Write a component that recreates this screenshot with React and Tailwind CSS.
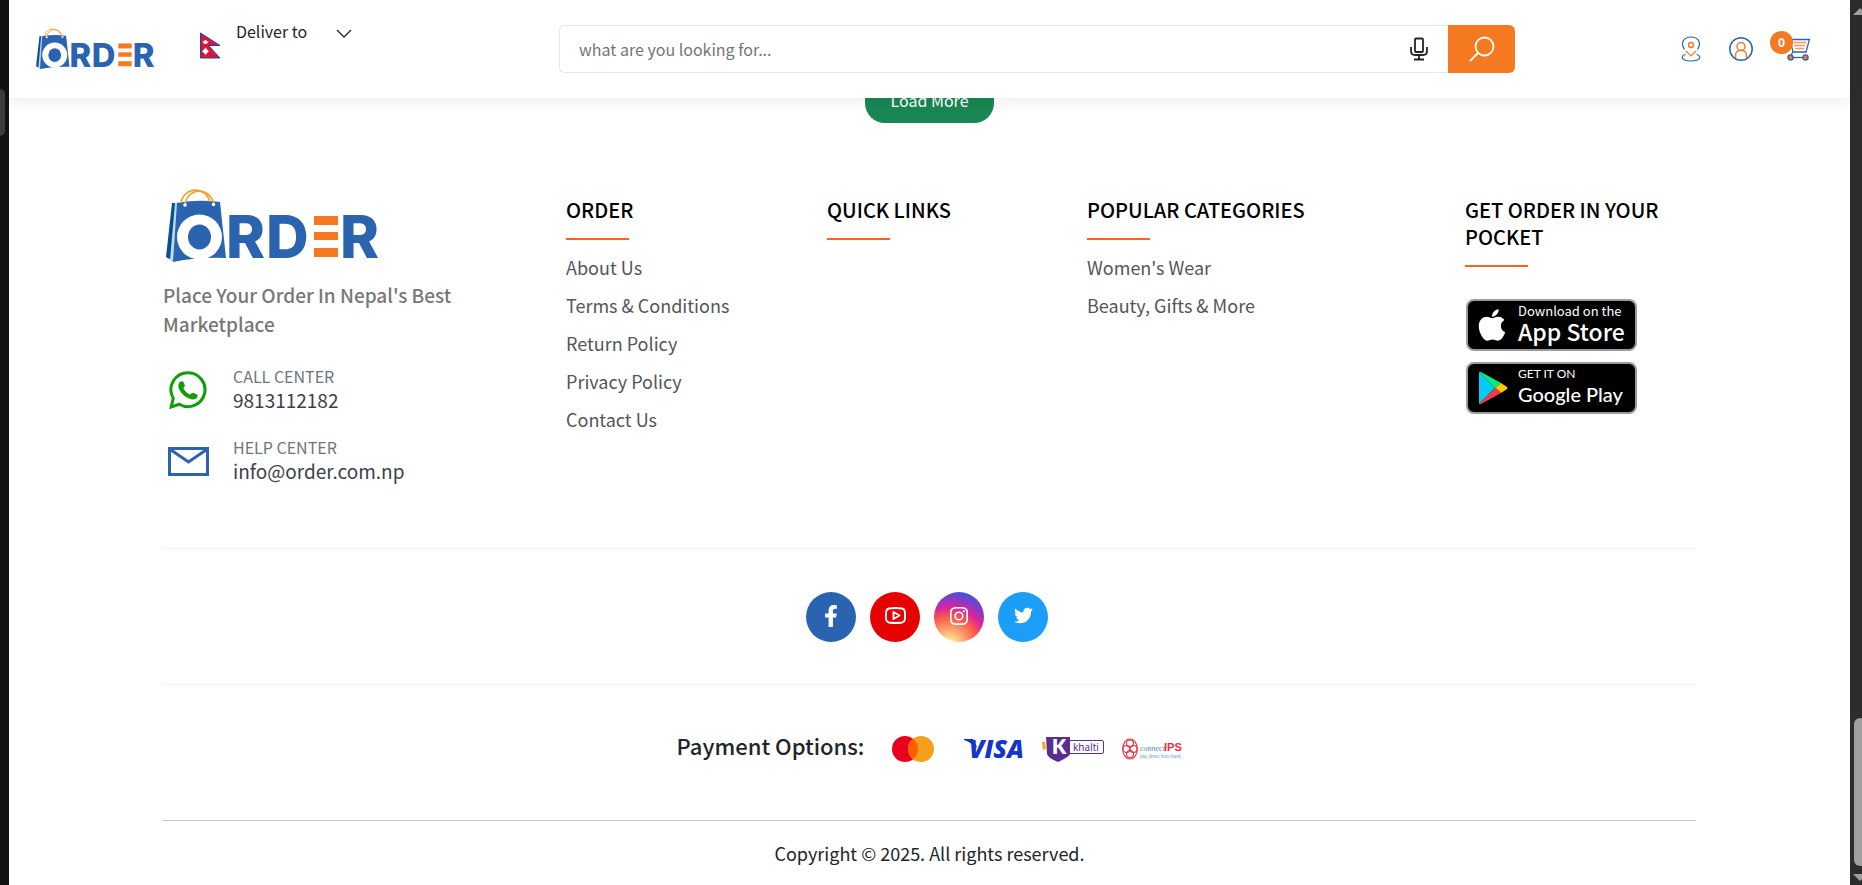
import { FaApple, FaFacebookF, FaTwitter } from "react-icons/fa";
import { BsInstagram } from "react-icons/bs";

/** ---- Data ---- */
const columns = [
  {
    title: "Order",
    links: [
      { label: "About Us", href: "/about-us" },
      { label: "Terms & Conditions", href: "/terms-and-conditions" },
      { label: "Return Policy", href: "/return-policy" },
      { label: "Privacy Policy", href: "/privacy-policy" },
      { label: "Contact Us", href: "/contact-us" },
    ],
  },
  { title: "Quick Links", links: [] },
  {
    title: "Popular Categories",
    links: [
      { label: "Women's Wear", href: "/category/womens-wear" },
      { label: "Beauty, Gifts & More", href: "/category/beauty-gifts" },
    ],
  },
];

/** ---- Logo ---- */
function Logo({ className }) {
  return (
    <svg viewBox="0 0 212 72" className={`overflow-visible ${className}`} role="img" aria-label="Order">
      <path d="M6 13 L0 67 L7 71 L12 13Z" fill="#07508f" />
      <path d="M9 13 L4 70 L8 71 L13 12Z" fill="#c5d6ea" />
      <path d="M11 13 Q32 9 54 12 L60 68 Q33 67 7 72Z" fill="#2a64b0" />
      <g fill="none" stroke="#f6a02c" strokeWidth="1.6">
        <path d="M15 13 C18 -4 40 -4 44 12" />
        <path d="M19 15 C21 -2 43 -5 48 14" />
      </g>
      <circle cx="19" cy="15" r="1.8" fill="#fff" />
      <circle cx="47.5" cy="14.5" r="1.8" fill="#fff" />
      <circle cx="33.5" cy="47" r="22.5" fill="#fff" />
      <ellipse cx="33.5" cy="47" rx="11.5" ry="12.5" fill="#2a64b0" />
      <g fill="#2a64b0" fontFamily="Inter, sans-serif" fontWeight="800" fontSize="59">
        <text x="60" y="68">R</text>
        <text x="100" y="68">D</text>
        <text x="174" y="68">R</text>
      </g>
      <g fill="#f57920">
        <rect x="148" y="26" width="24" height="9" />
        <rect x="148" y="42" width="24" height="8" />
        <rect x="148" y="58" width="24" height="9" />
      </g>
    </svg>
  );
}

/** ---- Header icons ---- */
const NepalFlag = () => (
  <svg viewBox="0 0 21 27" className="h-[27px] w-[21px]" aria-hidden="true">
    <path d="M.5 1 L20 13.5 H8.5 L20 26 H.5Z" fill="#dc143c" stroke="#1c4a9c" strokeWidth="1" />
    <path d="M2.5 9 Q5.5 11 8.5 9 Q8 12 5.5 12 Q3 12 2.5 9Z" fill="#fff" />
    <circle cx="5.5" cy="9.2" r="1.3" fill="#fff" />
    <path d="M5.5 15.5 L7 17.5 L9 19.2 L7 21 L5.5 23 L4 21 L2 19.2 L4 17.5Z" fill="#fff" />
  </svg>
);

const ChevronDown = () => (
  <svg viewBox="0 0 16 9" className="h-[9px] w-4" fill="none" stroke="#212529" strokeWidth="1.3" aria-hidden="true">
    <path d="M1 1 L8 8 L15 1" />
  </svg>
);

const MicIcon = () => (
  <svg viewBox="0 0 18 24" className="h-6 w-[18px]" fill="none" stroke="#212529" strokeWidth="1.8" aria-hidden="true">
    <rect x="5" y="1.5" width="8" height="13.5" rx="1" />
    <path d="M1 10 V14 Q1 18 5 18 H13 Q17 18 17 14 V10" />
    <path d="M9 18 V22.5 M4 22.5 H14" />
  </svg>
);

const SearchIcon = () => (
  <svg viewBox="0 0 26 26" className="size-[26px]" fill="none" stroke="#fff" strokeWidth="1.8" aria-hidden="true">
    <circle cx="15.5" cy="10.5" r="9" />
    <path d="M9 17 L1 25" />
  </svg>
);

const PinIcon = () => (
  <svg viewBox="0 0 20 26" className="h-[26px] w-5" fill="none" stroke="#2a64b0" strokeWidth="1.2" aria-hidden="true">
    <path d="M3.5 13.5 C-1.5 6 4 1 10 1 C16 1 21.5 6 16.5 13.5" />
    <path d="M5 15 L10 20 L15 15" stroke="#f57920" />
    <circle cx="10" cy="9" r="2.5" stroke="#f57920" strokeWidth="1.4" />
    <path d="M4.5 18.5 C-1 20 0 25 10 25 C20 25 21 20 15.5 18.5" />
  </svg>
);

const UserIcon = () => (
  <svg viewBox="0 0 24 24" className="size-6" fill="none" strokeWidth="1.5" aria-hidden="true">
    <circle cx="12" cy="12" r="11.2" stroke="#2a64b0" />
    <circle cx="12" cy="9.5" r="4" stroke="#f57920" />
    <path d="M6.5 21 V18.5 C6.5 11.5 17.5 11.5 17.5 18.5 V21" stroke="#f57920" />
  </svg>
);

const CartIcon = () => (
  <svg viewBox="0 0 26 24" className="h-6 w-[26px]" fill="none" stroke="#2a64b0" strokeWidth="1.3" aria-hidden="true">
    <path d="M4 2.5 H24.5 L21 15 H8 L5 2.5 M8 15 L6 18" />
    <path d="M8.5 5.5 H21.5 M9 8.5 H20.5 M10 11.5 H19.5" stroke="#f79a5b" />
    <path d="M8 20.5 H18" />
    <circle cx="5.5" cy="20.5" r="2.6" fill="#f57920" />
    <circle cx="20.5" cy="20.5" r="2.6" fill="#f57920" />
  </svg>
);

/** ---- Contact icons ---- */
const WhatsappIcon = () => (
  <svg viewBox="0 0 111 112" className="size-[38px]" aria-hidden="true">
    <path
      d="M56 5 A50 50 0 1 1 30 98 L6 106 L12 80 A50 50 0 0 1 56 5Z"
      fill="none"
      stroke="#129e0c"
      strokeWidth="9"
    />
    <path
      d="M30 34 C34 29 40 29 42 32 L46 42 C47 46 43 48 42 51 C46 60 53 66 61 69 C64 68 67 63 71 64 L82 69 C86 72 84 79 78 82 C70 86 60 82 54 79 C44 74 36 66 30 55 C26 47 26 40 30 34Z"
      fill="#129e0c"
    />
  </svg>
);

const MailIcon = () => (
  <svg viewBox="0 0 41 29" className="h-[29px] w-[41px]" fill="none" stroke="#2a64b0" strokeWidth="3" aria-hidden="true">
    <rect x="1.5" y="1.5" width="38" height="26" />
    <path d="M3 3 L20.5 15 L38 3" />
  </svg>
);

const YoutubeIcon = () => (
  <svg viewBox="0 0 21 17" className="h-[17px] w-[21px]" fill="none" stroke="#fff" strokeWidth="1.9" aria-hidden="true">
    <path d="M4 1.5 Q10.5 .5 17 1.5 Q19.5 2 19.8 4.5 Q20.3 8.5 19.8 12.5 Q19.5 15 17 15.5 Q10.5 16.5 4 15.5 Q1.5 15 1.2 12.5 Q.7 8.5 1.2 4.5 Q1.5 2 4 1.5Z" />
    <path d="M8.5 5 L14.5 8.5 L8.5 12Z" strokeLinejoin="round" />
  </svg>
);

const PlayIcon = () => (
  <svg viewBox="0 0 30 34" className="h-[34px] w-[30px]" aria-hidden="true">
    <path d="M1 1 V33 L17 17Z" fill="#00cdf7" />
    <path d="M1 1 L2.5 .8 L23 12 L17.5 17.5Z" fill="#00ee76" />
    <path d="M23 12 L29 16 Q30 17 29 18 L23 22 L17.5 17Z" fill="#ffca00" />
    <path d="M1 33 L2.5 33.2 L23 22 L17.5 16.5Z" fill="#f83748" />
  </svg>
);

const socials = [
  { name: "Facebook", bg: "bg-[#2a64b0]", icon: <FaFacebookF size={22} /> },
  { name: "YouTube", bg: "bg-[#e60000]", icon: <YoutubeIcon /> },
  {
    name: "Instagram",
    bg: "bg-[radial-gradient(circle_at_30%_107%,#fdf497_0%,#fdf497_5%,#fd5949_45%,#d6249f_60%,#285aeb_90%)]",
    icon: <BsInstagram size={18} />,
  },
  { name: "Twitter", bg: "bg-[#1b9df8]", icon: <FaTwitter size={19} /> },
];

/** ---- Payment logos ---- */
const Mastercard = () => (
  <svg viewBox="0 0 42 26" className="h-[26px] w-[42px]" role="img" aria-label="Mastercard">
    <circle cx="13" cy="13" r="13" fill="#eb001b" />
    <circle cx="29" cy="13" r="13" fill="#f79e1b" />
    <path d="M21 2.75 A13 13 0 0 1 21 23.25 A13 13 0 0 1 21 2.75Z" fill="#ff5f00" />
  </svg>
);

const Visa = () => (
  <svg viewBox="0 0 60 20" className="h-5 w-[60px] overflow-visible" role="img" aria-label="Visa">
    <path d="M0 0 H9 L13 8 L11 9 Q7 3 0 1Z" fill="#1434cb" />
    <text x="5" y="19" fill="#1434cb" fontFamily="'Open Sans', sans-serif" fontStyle="italic" fontWeight="800" fontSize="25">
      VISA
    </text>
  </svg>
);

const Khalti = () => (
  <svg viewBox="0 0 62 25" className="h-[25px] w-[62px] overflow-visible" role="img" aria-label="Khalti">
    <path d="M0 5 L3 4.5 L4 12 L1 13Z" fill="#f9a51a" />
    <rect x="20.5" y="3.5" width="41" height="13" rx="1.5" fill="#fff" stroke="#5c2d91" />
    <path d="M4 0 H28 V17 Q27 20 16 25 Q6 21 5 17Z" fill="#5c2d91" />
    <text x="10" y="17" fill="#fff" fontFamily="Lato, sans-serif" fontWeight="800" fontSize="20">K</text>
    <text x="31" y="14" fill="#5c2d91" fontFamily="'Noto Sans', sans-serif" fontSize="10">khalti</text>
  </svg>
);

const ConnectIps = () => (
  <svg viewBox="0 0 60 22" className="h-[22px] w-[60px] overflow-visible" role="img" aria-label="connectIPS">
    <g fill="none" stroke="#ed2f3b" strokeWidth="1.1">
      <ellipse cx="8" cy="11" rx="7.3" ry="10" />
      <circle cx="8" cy="5.5" r="3.5" />
      <circle cx="4.5" cy="11" r="3.5" />
      <circle cx="11.5" cy="11" r="3.5" />
      <circle cx="8" cy="16" r="3.5" />
    </g>
    <text x="18" y="13" fill="#4b86c4" fontFamily="'Liberation Serif', serif" fontStyle="italic" fontSize="8">connect</text>
    <text x="42" y="13" fill="#ed2f3b" fontFamily="'Liberation Sans', sans-serif" fontWeight="700" fontSize="11">IPS</text>
    <text x="18" y="20" fill="#6f9ccc" fontFamily="'Liberation Sans', sans-serif" fontSize="4.5">pay direct from bank</text>
  </svg>
);

function ColumnTitle({ children }) {
  return (
    <>
      <h3 className="text-xl/[27px] font-medium text-black uppercase">{children}</h3>
      <span className="mt-[15px] block h-0.5 w-[63px] bg-[#fd6220]" />
    </>
  );
}

function Header() {
  return (
    <header className="relative z-10 flex h-[98px] items-center bg-white pr-[39px] pl-[27px] shadow-[0_4px_14px_rgba(0,0,0,0.07)]">
      <div className="flex w-[523px] shrink-0 items-start">
        <a href="/" className="mr-[46px]">
          <Logo className="h-10 w-[118px]" />
        </a>
        <button type="button" className="flex items-start text-base/6">
          <span className="pt-[3px]">
            <NepalFlag />
          </span>
          <span className="ml-[15px] -mt-2.5">Deliver to</span>
          <span className="ml-[29px]">
            <ChevronDown />
          </span>
        </button>
      </div>

      <form role="search" className="flex h-12 max-w-[956px] flex-1">
        <div className="flex flex-1 items-center rounded-l-md border border-r-0 border-[#e6e6e6] pr-5">
          <input
            type="search"
            aria-label="Search products"
            placeholder="what are you looking for..."
            className="h-full flex-1 pl-[19px] text-base outline-none placeholder:text-[#6f7680]"
          />
          <button type="button" aria-label="Search by voice">
            <MicIcon />
          </button>
        </div>
        <button
          type="submit"
          aria-label="Search"
          className="flex w-[67px] items-center justify-center rounded-r-md bg-[#f57920]"
        >
          <SearchIcon />
        </button>
      </form>

      <nav className="ml-auto flex items-center gap-7">
        <a href="/track-order" aria-label="Track order">
          <PinIcon />
        </a>
        <a href="/account" aria-label="Account">
          <UserIcon />
        </a>
        <a href="/cart" aria-label="Cart" className="relative ml-1">
          <CartIcon />
          <span className="absolute -top-[6px] -left-[15px] flex size-[23px] items-center justify-center rounded-full bg-[#f57920] pb-0.5 text-xs/4 font-bold text-white">
            0
          </span>
        </a>
      </nav>
    </header>
  );
}

function Footer() {
  return (
    <footer className="mx-[154px] mt-16">
      <div className="grid grid-cols-[403fr_261fr_260fr_378fr_231fr] pb-[65px]">
        <div>
          <a href="/" className="block pt-[3px] pl-[3px]">
            <Logo className="h-[72px] w-[212px]" />
          </a>
          <p className="mt-[18px] max-w-[320px] text-[19px]/[29px] font-medium text-[#777]">
            Place Your Order In Nepal's Best Marketplace
          </p>
          <div className="mt-[26px] flex items-center">
            <span className="flex w-[70px] pt-[3px] pl-1.5">
              <WhatsappIcon />
            </span>
            <div>
              <p className="text-base/6 text-[#6c757d]">CALL CENTER</p>
              <a href="tel:9813112182" className="block text-[19px]/6 text-[#3b414b]">
                9813112182
              </a>
            </div>
          </div>
          <div className="mt-[23px] flex items-center">
            <span className="flex w-[70px] pt-[5px] pl-[5px]">
              <MailIcon />
            </span>
            <div>
              <p className="text-base/6 text-[#6c757d]">HELP CENTER</p>
              <a href="mailto:info@order.com.np" className="block text-[19px]/6 text-[#3b414b]">
                info@order.com.np
              </a>
            </div>
          </div>
        </div>

        {columns.map((col) => (
          <div key={col.title} className="pt-[9px]">
            <ColumnTitle>{col.title}</ColumnTitle>
            <ul className="mt-2">
              {col.links.map((it) => (
                <li key={it.href} className="text-lg/[38px] text-[#52565b]">
                  <a href={it.href}>{it.label}</a>
                </li>
              ))}
            </ul>
          </div>
        ))}

        <div className="pt-[9px]">
          <ColumnTitle>Get Order In Your Pocket</ColumnTitle>
          <div className="mt-8 flex flex-col items-start gap-[11px] pl-px">
            <a
              href="/app-store"
              className="flex h-[52px] w-[171px] items-center rounded-lg border-2 border-[#9b9b9b] bg-black pl-1.5 text-white"
            >
              <FaApple size={36} />
              <span className="ml-2 pb-1">
                <span className="block text-[13px]/4">Download on the</span>
                <span className="block text-[23px]/6 font-medium">App Store</span>
              </span>
            </a>
            <a
              href="/google-play"
              className="flex h-[52px] w-[171px] items-center rounded-lg border-2 border-[#9b9b9b] bg-black pl-[10px] text-white"
            >
              <PlayIcon />
              <span className="ml-[10px] pb-1 font-['Lato',sans-serif]">
                <span className="block text-xs/4">GET IT ON</span>
                <span className="block text-xl/6 font-medium">Google Play</span>
              </span>
            </a>
          </div>
        </div>
      </div>

      <div className="flex justify-center gap-[14px] border-y border-[#f3f3f3] pt-[43px] pr-[5px] pb-[42px]">
        {socials.map((s) => (
          <a
            key={s.name}
            href={`/${s.name.toLowerCase()}`}
            aria-label={s.name}
            className={`flex size-[50px] items-center justify-center rounded-full pb-[3px] text-white ${s.bg}`}
          >
            {s.icon}
          </a>
        ))}
      </div>

      <div className="flex items-center justify-center border-b border-[#c4c8c6] pt-[45px] pb-[52px]">
        <h4 className="mr-7 pb-2 text-[22px]/[30px] font-medium">Payment Options:</h4>
        <div className="flex items-center gap-[18px]">
          <span className="mr-3">
            <Mastercard />
          </span>
          <Visa />
          <Khalti />
          <ConnectIps />
        </div>
      </div>

      <p className="py-[18px] text-center text-lg/7">Copyright © 2025. All rights reserved.</p>
    </footer>
  );
}

export default function App() {
  return (
    <div className="flex min-h-screen bg-white font-['Noto_Sans_CJK_SC',sans-serif] text-[#212529]">
      {/* window edge */}
      <div className="w-[9px] shrink-0 bg-[#121212] pt-[89px]">
        <div className="h-[47px] w-[5px] rounded-r-lg bg-[#3c3c3c]" />
      </div>

      <div className="min-w-0 flex-1">
        <Header />
        <div className="-mt-[19px] flex justify-center">
          <button type="button" className="h-11 w-[129px] rounded-[20px] bg-[#198754] pb-0.5 text-base/6 text-white">
            Load More
          </button>
        </div>
        <Footer />
      </div>

      {/* scrollbar */}
      <div className="flex w-3 shrink-0 flex-col overflow-hidden bg-[#2c2c2c] pt-2 pb-1 pl-[3px]" aria-hidden="true">
        <svg viewBox="0 0 14 7" className="h-[7px] w-[14px]" fill="#9f9f9f">
          <path d="M0 7 L7 0 L14 7Z" />
        </svg>
        <div className="mt-auto mb-2 ml-px h-[148px] w-3 rounded-full bg-[#9f9f9f]" />
        <svg viewBox="0 0 14 7" className="h-[7px] w-[14px]" fill="#9f9f9f">
          <path d="M0 0 L7 7 L14 0Z" />
        </svg>
      </div>
    </div>
  );
}
